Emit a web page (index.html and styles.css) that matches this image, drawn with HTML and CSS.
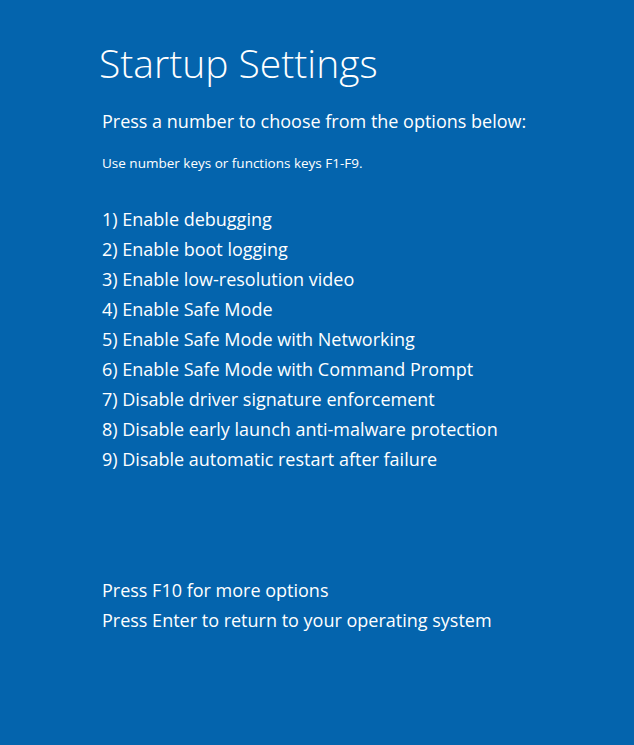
FILE: index.html
```html
<!DOCTYPE html>
<html>
<head>
<meta charset="utf-8">
<link rel="stylesheet" href="styles.css">
</head>
<body>
<main class="screen">
  <h1 class="title">Startup Settings</h1>
  <p class="lead">Press a number to choose from the options below:</p>
  <p class="hint">Use number keys or functions keys F1-F9.</p>
  <ol class="options">
    <li>1) Enable debugging</li>
    <li>2) Enable boot logging</li>
    <li>3) Enable low-resolution video</li>
    <li>4) Enable Safe Mode</li>
    <li>5) Enable Safe Mode with Networking</li>
    <li>6) Enable Safe Mode with Command Prompt</li>
    <li>7) Disable driver signature enforcement</li>
    <li>8) Disable early launch anti-malware protection</li>
    <li>9) Disable automatic restart after failure</li>
  </ol>
  <div class="footer">
    <p>Press F10 for more options</p>
    <p>Press Enter to return to your operating system</p>
  </div>
</main>
</body>
</html>
```
FILE: styles.css
```css
html, body {
  margin: 0;
  padding: 0;
  height: 100%;
}
body {
  background: #0464ad;
  color: #ffffff;
  font-family: "Open Sans", "Noto Sans", sans-serif;
}
.screen {
  padding: 38px 0 0 99px;
}
.title {
  margin: 0;
  font-size: 39px;
  font-weight: 300;
  line-height: 50px;
}
.lead {
  margin: 20px 0 0 3px;
  font-size: 18px;
  line-height: 26px;
}
.hint {
  margin: 20px 0 0 3px;
  font-size: 13.5px;
  line-height: 18px;
}
.options {
  list-style: none;
  margin: 32px 0 0 3px;
  padding: 0;
  font-size: 18px;
  line-height: 30px;
}
.footer {
  margin: 101px 0 0 3px;
  font-size: 18px;
  line-height: 30px;
}
.footer p {
  margin: 0;
}
```
